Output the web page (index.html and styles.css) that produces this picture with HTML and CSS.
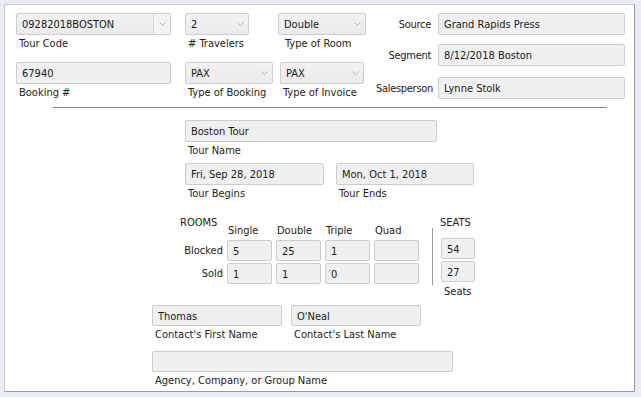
FILE: index.html
```html
<!DOCTYPE html>
<html lang="en">
<head>
  <meta charset="UTF-8">
  <title>Booking</title>
  <link rel="stylesheet" href="styles.css">
</head>
<body>
  <div class="panel">

    <div class="top">
      <div class="left">
        <div class="row">
          <div class="item w155">
            <div class="combo split">09282018BOSTON<span class="arrow"><svg width="7" height="4" viewBox="0 0 7 4"><polyline points="0.5,0.5 3.5,3.5 6.5,0.5" fill="none" stroke="#b4b4b4"/></svg></span></div>
            <div class="cap">Tour Code</div>
          </div>
          <div class="item w64 ml14">
            <div class="combo">2<span class="arrow"><svg width="7" height="4" viewBox="0 0 7 4"><polyline points="0.5,0.5 3.5,3.5 6.5,0.5" fill="none" stroke="#b4b4b4"/></svg></span></div>
            <div class="cap">&#35; Travelers</div>
          </div>
          <div class="item w88 ml29">
            <div class="combo">Double<span class="arrow"><svg width="7" height="4" viewBox="0 0 7 4"><polyline points="0.5,0.5 3.5,3.5 6.5,0.5" fill="none" stroke="#b4b4b4"/></svg></span></div>
            <div class="cap cap-room">Type of Room</div>
          </div>
        </div>
        <div class="row row2">
          <div class="item w155">
            <div class="field">67940</div>
            <div class="cap">Booking &#35;</div>
          </div>
          <div class="item w88 ml14">
            <div class="combo">PAX<span class="arrow"><svg width="7" height="4" viewBox="0 0 7 4"><polyline points="0.5,0.5 3.5,3.5 6.5,0.5" fill="none" stroke="#b4b4b4"/></svg></span></div>
            <div class="cap">Type of Booking</div>
          </div>
          <div class="item w84 ml7">
            <div class="combo">PAX<span class="arrow"><svg width="7" height="4" viewBox="0 0 7 4"><polyline points="0.5,0.5 3.5,3.5 6.5,0.5" fill="none" stroke="#b4b4b4"/></svg></span></div>
            <div class="cap">Type of Invoice</div>
          </div>
        </div>
      </div>

      <div class="right">
        <div class="pair">
          <span class="side">Source</span>
          <div class="field w187">Grand Rapids Press</div>
        </div>
        <div class="pair p2">
          <span class="side">Segment</span>
          <div class="field w187">8/12/2018 Boston</div>
        </div>
        <div class="pair p3">
          <span class="side">Salesperson</span>
          <div class="field w187">Lynne Stolk</div>
        </div>
      </div>
    </div>

    <div class="rule"></div>

    <div class="tour">
      <div class="field w252">Boston Tour</div>
      <div class="cap">Tour Name</div>
      <div class="row dates">
        <div class="item w139">
          <div class="field">Fri, Sep 28, 2018</div>
          <div class="cap">Tour Begins</div>
        </div>
        <div class="item w138 ml12">
          <div class="field">Mon, Oct 1, 2018</div>
          <div class="cap">Tour Ends</div>
        </div>
      </div>
    </div>

    <div class="counts">
      <div class="rooms">
        <div class="rooms-title">ROOMS</div>
        <div class="head">Single</div>
        <div class="head">Double</div>
        <div class="head">Triple</div>
        <div class="head">Quad</div>

        <div class="rowlabel">Blocked</div>
        <div class="cell">5</div>
        <div class="cell">25</div>
        <div class="cell">1</div>
        <div class="cell"></div>

        <div class="rowlabel">Sold</div>
        <div class="cell">1</div>
        <div class="cell">1</div>
        <div class="cell">0</div>
        <div class="cell"></div>
      </div>
      <div class="vline"></div>
      <div class="seats">
        <div class="seats-title">SEATS</div>
        <div class="cell">54</div>
        <div class="cell">27</div>
        <div class="cap seats-cap">Seats</div>
      </div>
    </div>

    <div class="contact">
      <div class="row">
        <div class="item w130">
          <div class="field short">Thomas</div>
          <div class="cap">Contact's First Name</div>
        </div>
        <div class="item w130 ml9">
          <div class="field short">O'Neal</div>
          <div class="cap">Contact's Last Name</div>
        </div>
      </div>
      <div class="agency">
        <div class="field short w301"></div>
        <div class="cap">Agency, Company, or Group Name</div>
      </div>
    </div>

  </div>
</body>
</html>
```

FILE: styles.css
```css
body {
  margin: 0;
  background: #e9ecf7;
  font-family: "DejaVu Sans Condensed", "DejaVu Sans", sans-serif;
  font-stretch: condensed;
  font-size: 11px;
  color: #1a1a1a;
}
.panel {
  box-sizing: border-box;
  margin: 4px 0 0 4px;
  width: 631px;
  height: 388px;
  background: #fff;
  border: 1px solid #c9c9c9;
  border-right-color: #9a9a9a;
  border-bottom-color: #9a9a9a;
  padding-top: 8px;
}
.row {
  display: flex;
}
.item {
  display: flex;
  flex-direction: column;
}
.field,
.combo,
.cell {
  box-sizing: border-box;
  height: 22px;
  background: #f0f0f0;
  border: 1px solid #cdcdcd;
  border-radius: 2px;
  padding: 1px 0 0 5px;
  display: flex;
  align-items: center;
  white-space: nowrap;
  overflow: hidden;
}
.short,
.cell {
  height: 21px;
}
.combo {
  position: relative;
  background: linear-gradient(#f2f2f2, #ebebeb);
}
.combo .arrow {
  position: absolute;
  right: 0;
  top: 0;
  bottom: 0;
  width: 16px;
  display: flex;
  align-items: center;
  justify-content: center;
}
.combo.split .arrow {
  border-left: 1px solid #d8d8d8;
  background: #f3f3f3;
}
.cap {
  line-height: 14px;
  margin-top: 2px;
  padding-left: 3px;
  color: #222;
}
.cap-room {
  padding-left: 7px;
}

.top {
  display: flex;
  padding-left: 11px;
}
.left {
  width: 360px;
}
.row2 {
  margin-top: 11px;
}
.w64 { width: 64px; }
.w84 { width: 84px; }
.w88 { width: 88px; }
.w130 { width: 130px; }
.w138 { width: 138px; }
.w139 { width: 139px; }
.w155 { width: 155px; }
.w187 { width: 187px; }
.w252 { width: 252px; }
.w301 { width: 301px; }
.ml7 { margin-left: 7px; }
.ml9 { margin-left: 9px; }
.ml12 { margin-left: 12px; }
.ml14 { margin-left: 14px; }
.ml29 { margin-left: 29px; }

.right {
  display: flex;
  flex-direction: column;
}
.pair {
  display: flex;
  align-items: center;
}
.p2 { margin-top: 9px; }
.p3 { margin-top: 11px; }
.side {
  width: 55px;
  margin-right: 7px;
  text-align: right;
  white-space: nowrap;
  letter-spacing: -0.3px;
  color: #222;
}

.rule {
  margin: 7px 0 0 48px;
  width: 554px;
  border-top: 1px solid #8a8a8a;
}

.tour {
  margin: 12px 0 0 180px;
}
.dates {
  margin-top: 5px;
}

.counts {
  display: flex;
  margin: 12px 0 0 171px;
}
.rooms {
  display: grid;
  grid-template-columns: 47px 45px 45px 45px 45px;
  grid-template-rows: 25px 21px 21px;
  column-gap: 4px;
  row-gap: 2px;
}
.rooms-title {
  padding: 3px 0 0 4px;
  line-height: 14px;
  color: #222;
}
.head {
  align-self: end;
  padding-left: 1px;
  line-height: 14px;
  color: #222;
}
.rowlabel {
  text-align: right;
  line-height: 21px;
  color: #222;
}
.vline {
  width: 0;
  height: 57px;
  margin: 15px 0 0 13px;
  border-left: 1px solid #9a9a9a;
}
.seats {
  width: 34px;
  margin-left: 8px;
  display: flex;
  flex-direction: column;
}
.seats-title {
  margin: 3px 0 8px -1px;
  line-height: 14px;
  color: #222;
}
.seats .cell + .cell {
  margin-top: 2px;
}
.seats-cap {
  margin-top: 3px;
}

.contact {
  margin: 6px 0 0 147px;
}
.agency {
  margin-top: 9px;
}
```
